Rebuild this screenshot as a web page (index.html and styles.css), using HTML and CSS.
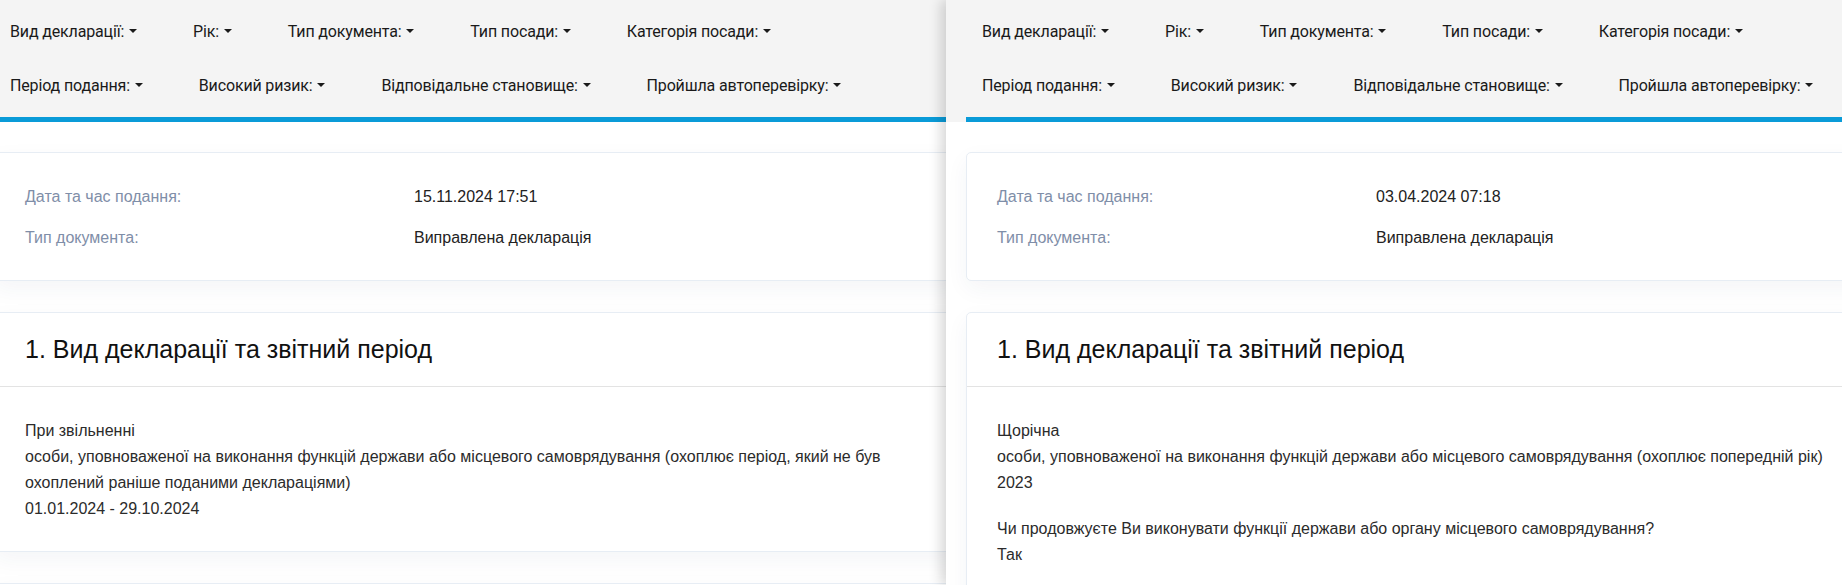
FILE: index.html
```html
<!DOCTYPE html>
<html lang="uk">

<head>
    <meta charset="UTF-8">
    <meta name="viewport" content="width=device-width, initial-scale=1.0">
    <title>Порівняння декларацій</title>
    <link rel="stylesheet" href="styles.css">
</head>

<body>
    <div class="compare">
        <!-- left declaration -->
        <section class="pane pane-left">
            <header class="pane-head">
                <nav class="filters">
                    <div class="filter-row">
                        <button class="filter-toggle">Вид декларації:</button>
                        <button class="filter-toggle">Рік:</button>
                        <button class="filter-toggle">Тип документа:</button>
                        <button class="filter-toggle">Тип посади:</button>
                        <button class="filter-toggle">Категорія посади:</button>
                    </div>
                    <div class="filter-row">
                        <button class="filter-toggle">Період подання:</button>
                        <button class="filter-toggle">Високий ризик:</button>
                        <button class="filter-toggle">Відповідальне становище:</button>
                        <button class="filter-toggle">Пройшла автоперевірку:</button>
                    </div>
                </nav>
            </header>

            <div class="pane-body">
                <div class="card card-meta">
                    <div class="meta-row">
                        <span class="meta-label">Дата та час подання:</span>
                        <span class="meta-value">15.11.2024 17:51</span>
                    </div>
                    <div class="meta-row">
                        <span class="meta-label">Тип документа:</span>
                        <span class="meta-value">Виправлена декларація</span>
                    </div>
                </div>

                <div class="card">
                    <div class="card-header">
                        <h2>1. Вид декларації та звітний період</h2>
                    </div>
                    <div class="card-body">
                        <div class="field">
                            <div>При звільненні</div>
                            <div>особи, уповноваженої на виконання функцій держави або місцевого самоврядування (охоплює період, який не був охоплений раніше поданими деклараціями)</div>
                            <div>01.01.2024 - 29.10.2024</div>
                        </div>
                    </div>
                </div>

                <!-- next section, below the fold -->
                <div class="card card-next"></div>
            </div>
        </section>

        <!-- right declaration -->
        <section class="pane pane-right">
            <header class="pane-head">
                <nav class="filters">
                    <div class="filter-row">
                        <button class="filter-toggle">Вид декларації:</button>
                        <button class="filter-toggle">Рік:</button>
                        <button class="filter-toggle">Тип документа:</button>
                        <button class="filter-toggle">Тип посади:</button>
                        <button class="filter-toggle">Категорія посади:</button>
                    </div>
                    <div class="filter-row">
                        <button class="filter-toggle">Період подання:</button>
                        <button class="filter-toggle">Високий ризик:</button>
                        <button class="filter-toggle">Відповідальне становище:</button>
                        <button class="filter-toggle">Пройшла автоперевірку:</button>
                    </div>
                </nav>
            </header>

            <div class="pane-body">
                <div class="card card-meta">
                    <div class="meta-row">
                        <span class="meta-label">Дата та час подання:</span>
                        <span class="meta-value">03.04.2024 07:18</span>
                    </div>
                    <div class="meta-row">
                        <span class="meta-label">Тип документа:</span>
                        <span class="meta-value">Виправлена декларація</span>
                    </div>
                </div>

                <div class="card">
                    <div class="card-header">
                        <h2>1. Вид декларації та звітний період</h2>
                    </div>
                    <div class="card-body">
                        <div class="field">
                            <div>Щорічна</div>
                            <div>особи, уповноваженої на виконання функцій держави або місцевого самоврядування (охоплює попередній рік)</div>
                            <div>2023</div>
                        </div>
                        <div class="field">
                            <div>Чи продовжуєте Ви виконувати функції держави або органу місцевого самоврядування?</div>
                            <div>Так</div>
                        </div>
                    </div>
                </div>
            </div>
        </section>
    </div>
</body>

</html>
```

FILE: styles.css
```css
body {
    margin: 0;
    padding: 0;
    background-color: #fff;
    font-family: 'Liberation Sans', Arial, sans-serif;
    color: #212529;
}

.compare {
    display: flex;
    height: 585px;
    overflow: hidden;
}

.pane {
    overflow: hidden;
    background: #fff;
}

.pane-left {
    flex: 0 0 946px;
    --shift: -6px;
    --inner: 965px;
    --label: 389px;
}

.pane-right {
    flex: 1 1 auto;
    position: relative;
    z-index: 1;
    box-shadow: -5px 0 12px rgba(0, 0, 0, 0.16);
    --shift: 20px;
    --inner: 920px;
    --label: 379px;
}

/* filter bar */
.pane-head {
    background-color: #f4f4f4;
}

.filters {
    width: var(--inner);
    margin-left: var(--shift);
    padding: 5px 0 4px 16px;
    box-sizing: border-box;
    border-bottom: 5px solid #0a9bd8;
}

.filter-row {
    display: flex;
    gap: 56px;
    height: 54px;
    align-items: center;
}

.filter-toggle {
    padding: 0;
    border: none;
    background: none;
    font-family: Roboto, 'Liberation Sans', sans-serif;
    font-size: 16px;
    line-height: 24px;
    letter-spacing: -0.15px;
    color: #1a1a1a;
    white-space: nowrap;
    cursor: pointer;
}

.filter-toggle::after {
    content: "";
    display: inline-block;
    margin-left: .3em;
    vertical-align: .255em;
    border-top: .3em solid;
    border-right: .3em solid transparent;
    border-left: .3em solid transparent;
}

/* cards */
.pane-body {
    width: var(--inner);
    margin-left: var(--shift);
    padding-top: 30px;
}

.card {
    background: #fff;
    border: 1px solid #e7edf4;
    border-radius: 5px;
    box-shadow: 0 8px 22px rgba(30, 50, 90, 0.05);
    margin-bottom: 31px;
}

.card-meta {
    padding: 32px 30px 30px;
    display: flex;
    flex-direction: column;
    gap: 17px;
}

.card-next {
    height: 60px;
}

.meta-row {
    display: flex;
    font-size: 16px;
    line-height: 24px;
}

.meta-label {
    flex: 0 0 var(--label);
    color: #7f8ea8;
}

.meta-value {
    color: #222;
}

.card-header {
    padding: 22px 30px;
    border-bottom: 1px solid #e3e3e3;
}

.card-header h2 {
    margin: 0;
    font-size: 25px;
    font-weight: normal;
    line-height: 29px;
    color: #111;
}

.card-body {
    padding: 31px 30px 29px;
    font-size: 16px;
    line-height: 26px;
    color: #2b2b2b;
}

.field + .field {
    margin-top: 20px;
}
```
